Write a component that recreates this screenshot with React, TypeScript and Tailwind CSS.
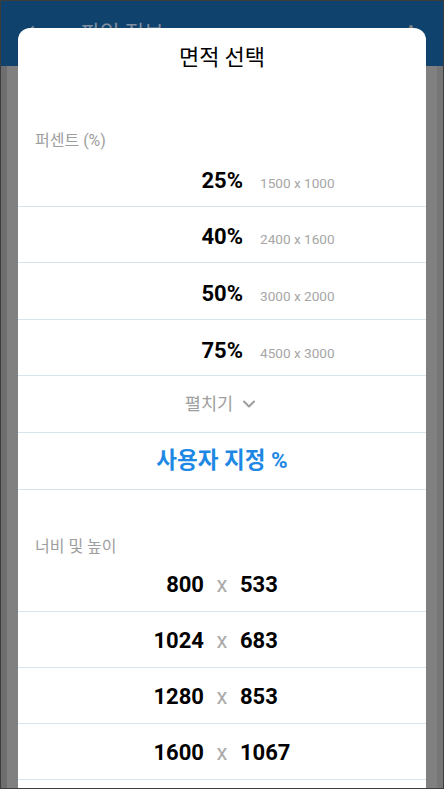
import React from "react";
import { ArrowLeft, ChevronDown, MoreVertical } from "lucide-react";

const FONT = { fontFamily: 'Roboto, "Noto Sans CJK KR", sans-serif' };

const percentRows = [
  { pct: "25%", size: "1500 x 1000" },
  { pct: "40%", size: "2400 x 1600" },
  { pct: "50%", size: "3000 x 2000" },
  { pct: "75%", size: "4500 x 3000" },
];

const sizeRows = [
  { w: "800", h: "533" },
  { w: "1024", h: "683" },
  { w: "1280", h: "853" },
  { w: "1600", h: "1067" },
];

export default function App() {
  return (
    <div
      className="relative w-[444px] h-[789px] overflow-hidden border border-[#3c3c3c] bg-[#808080] flex flex-col"
      style={FONT}
    >
      {/* background page, dimmed */}
      <header className="h-[65px] shrink-0 bg-[#10426e] flex items-center px-5 gap-9">
        <ArrowLeft className="h-6 w-6 text-[#7f8c99]" />
        <span className="text-[21px] text-[#8090a0]">파일 정보</span>
        <MoreVertical className="ml-auto h-6 w-6 text-[#7f7f7f]" />
      </header>
      <div className="flex-1 flex">
        <div className="w-[6px] bg-[#6e6e6e]" />
        <div className="flex-1" />
        <div className="w-[6px] bg-[#767676]" />
      </div>

      {/* sheet */}
      <div className="absolute left-[17px] right-[17px] top-[27px] bottom-0 bg-white rounded-t-[12px] flex flex-col">
        <div className="h-[54px] flex items-center justify-center">
          <h1 className="text-[22px] text-black" style={{ fontFamily: '"Noto Sans CJK KR", sans-serif' }}>
            면적 선택
          </h1>
        </div>

        <div className="pt-[50px] pl-[17px] text-[16px] leading-[18px] text-[#9e9e9e]">퍼센트 (%)</div>

        {percentRows.map((r) => (
          <div key={r.pct} className="h-[56.6px] border-b border-[#d6e6ee] flex items-center pt-[5px]">
            <div className="flex items-baseline">
              <span className="w-[225px] text-right text-[22px] font-bold text-black">{r.pct}</span>
              <span className="ml-[17px] text-[13.6px] text-[#a6a6a6]">{r.size}</span>
            </div>
          </div>
        ))}

        <div className="h-[56.6px] border-b border-[#d6e6ee] flex items-center justify-center gap-[6px] text-[#9e9e9e]">
          <span className="text-[17.5px]">펼치기</span>
          <ChevronDown className="h-5 w-5" strokeWidth={2.5} />
        </div>

        <div className="h-[56.6px] border-b border-[#d6e6ee] flex items-center justify-center">
          <span className="text-[22.5px] font-bold text-[#1e88e5]">사용자 지정 %</span>
        </div>

        <div className="pt-[48px] pl-[17px] text-[16px] leading-[18px] text-[#9e9e9e]">너비 및 높이</div>

        {sizeRows.map((r) => (
          <div key={r.w} className="h-[56px] border-b border-[#d6e6ee] flex items-center pt-[3px]">
            <div className="flex items-baseline text-[22px]">
              <span className="w-[186px] text-right font-bold text-black">{r.w}</span>
              <span className="w-[36px] text-center text-[#aaaaaa]">x</span>
              <span className="font-bold text-black">{r.h}</span>
            </div>
          </div>
        ))}
      </div>
    </div>
  );
}
